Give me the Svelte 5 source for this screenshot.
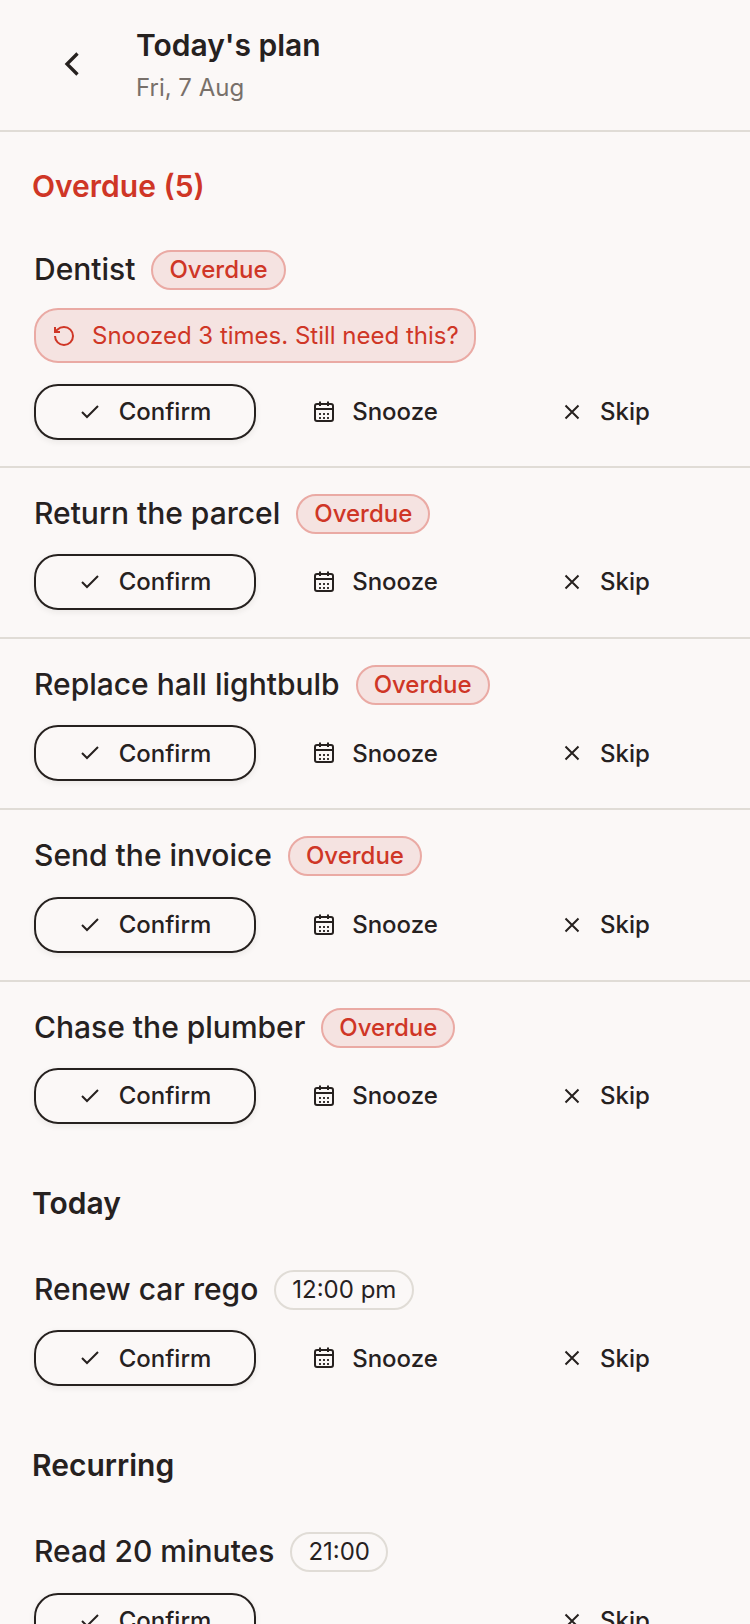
<script>
	const overdue = ['Return the parcel', 'Replace hall lightbulb', 'Send the invoice', 'Chase the plumber'];
</script>

{#snippet actions(snooze = true)}
	<div class="actions">
		<button class="action confirm">
			<svg viewBox="0 0 24 24" class="icon"><path d="M19 6 8 17l-5-5" /></svg>
			Confirm
		</button>
		{#if snooze}
			<button class="action">
				<svg viewBox="0 0 24 24" class="icon">
					<rect x="3" y="4" width="18" height="17" rx="2" />
					<path d="M3 9h18M8 1.5V6M16 1.5V6" />
					<path class="dots" d="M8 14h.01M12 14h.01M16 14h.01M8 18h.01M12 18h.01M16 18h.01" />
				</svg>
				Snooze
			</button>
		{:else}
			<div class="action"></div>
		{/if}
		<button class="action">
			<svg viewBox="0 0 24 24" class="icon"><path d="M5.5 5.5l13 13M18.5 5.5l-13 13" /></svg>
			Skip
		</button>
	</div>
{/snippet}

<div class="page">
	<header class="header">
		<button class="back" aria-label="Back">
			<svg viewBox="0 0 24 24"><path d="M15 5l-7 7 7 7" /></svg>
		</button>
		<div class="heading">
			<h1>Today's plan</h1>
			<div class="date">Fri, 7 Aug</div>
		</div>
	</header>

	<h2 class="section red">Overdue (5)</h2>

	<div class="item snoozed">
		<div class="title-row">
			<span class="title">Dentist</span>
			<span class="pill overdue">Overdue</span>
		</div>
		<div class="nudge">
			<svg viewBox="0 0 24 24"><path d="M3 12a9 9 0 1 0 9-9 9.75 9.75 0 0 0-6.74 2.74L3 8" /><path d="M3 3v5h5" /></svg>
			Snoozed 3 times. Still need this?
		</div>
		{@render actions()}
	</div>
	{#each overdue as title}
		<div class="item">
			<div class="title-row">
				<span class="title">{title}</span>
				<span class="pill overdue">Overdue</span>
			</div>
			{@render actions()}
		</div>
	{/each}

	<h2 class="section">Today</h2>
	<div class="item">
		<div class="title-row">
			<span class="title">Renew car rego</span>
			<span class="pill">12:00 pm</span>
		</div>
		{@render actions()}
	</div>

	<h2 class="section">Recurring</h2>
	<div class="item">
		<div class="title-row">
			<span class="title">Read 20 minutes</span>
			<span class="pill">21:00</span>
		</div>
		{@render actions(false)}
	</div>
</div>

<style>
	:global(body) {
		background: #fbf8f7;
	}

	.page {
		font-family: Inter, sans-serif;
		color: #26211f;
		height: 1624px;
		overflow: hidden;
	}

	.header {
		display: flex;
		align-items: center;
		gap: 27px;
		height: 130px;
		padding-left: 37px;
		border-bottom: 2px solid #e0dcd6;
	}

	.back {
		width: 72px;
		height: 72px;
		margin-bottom: 3px;
		padding: 0;
		border: 0;
		background: none;
		display: flex;
		align-items: center;
		justify-content: center;
	}

	.back svg {
		width: 36px;
		height: 36px;
		fill: none;
		stroke: #26211f;
		stroke-width: 2.2;
	}

	.heading {
		padding-top: 1px;
	}

	h1 {
		margin: 0;
		font-size: 30px;
		line-height: 36px;
		font-weight: 600;
	}

	.date {
		margin-top: 9px;
		font-size: 24px;
		line-height: 32px;
		color: #78706a;
	}

	.section {
		margin: 0;
		padding: 34px 32px 23px;
		font-size: 30px;
		line-height: 36px;
		font-weight: 600;
	}

	.section.red {
		padding: 36px 32px 20px;
		color: #cf3626;
	}

	.item {
		padding: 24px 34px 26.93px;
		border-bottom: 2px solid #e0dcd6;
	}

	.item.snoozed {
		padding-bottom: 26px;
	}

	.item:has(+ .section),
	.item:last-child {
		border-bottom: 0;
	}

	.title-row {
		display: flex;
		align-items: center;
		gap: 16px;
		height: 44px;
	}

	.title {
		padding-bottom: 2px;
		font-size: 30px;
		line-height: 40px;
		font-weight: 500;
	}

	.pill {
		font-size: 24px;
		line-height: 36px;
		padding: 0 16px;
		border: 2px solid #e0dcd6;
		border-radius: 20px;
	}

	.overdue {
		color: #cf3626;
		background: #f5e3e1;
		border-color: #eaaaa4;
		font-weight: 500;
	}

	.nudge {
		display: flex;
		width: fit-content;
		align-items: center;
		gap: 16px;
		box-sizing: border-box;
		margin-top: 16px;
		padding: 0 15px 0 16px;
		height: 55px;
		border: 2px solid #eaaaa4;
		border-radius: 24px;
		background: #f5e3e1;
		color: #cf3626;
		font-size: 24px;
	}

	.nudge svg {
		width: 24px;
		height: 24px;
		fill: none;
		stroke: currentColor;
		stroke-width: 2;
	}

	.actions {
		display: grid;
		grid-template-columns: repeat(3, 1fr);
		gap: 8px;
		margin-top: 18.4px;
	}

	.nudge + .actions {
		margin-top: 20.6px;
	}

	.action {
		display: flex;
		align-items: center;
		justify-content: center;
		gap: 16px;
		box-sizing: border-box;
		height: 56px;
		padding: 0;
		border: 2px solid transparent;
		border-radius: 24px;
		background: none;
		color: inherit;
		font: 500 24px Inter, sans-serif;
	}

	.confirm {
		border-color: #26211f;
		box-shadow: 0 2px 6px rgba(38, 33, 31, 0.08);
	}

	.icon {
		width: 24px;
		height: 24px;
		fill: none;
		stroke: #26211f;
		stroke-width: 2;
	}

	.dots {
		stroke-width: 1.8;
		stroke-linecap: square;
	}
</style>
